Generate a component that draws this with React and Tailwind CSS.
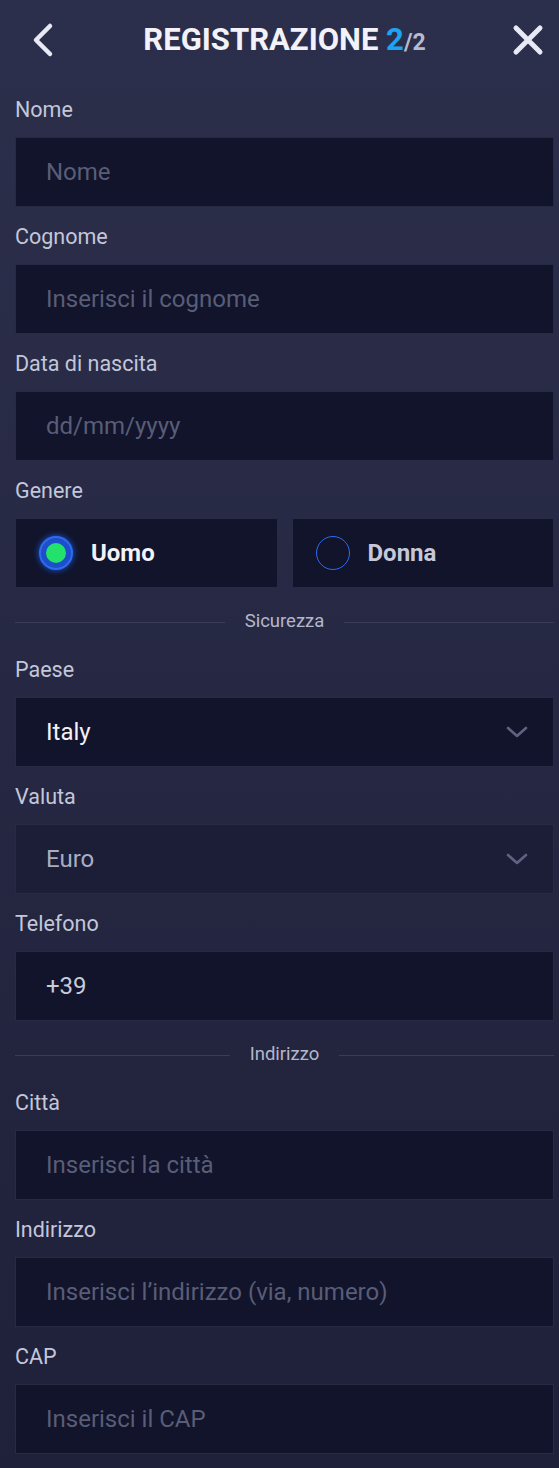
import React from 'react';

const font = { fontFamily: 'Roboto, "Noto Sans", sans-serif' };

const Label = ({ children }) => (
    <div className="mt-[18px] mb-[15px] h-[24px] leading-[24px] text-[21.5px] text-[#c3c7da]">{children}</div>
);

const TextField = ({ placeholder, value }) => (
    <div className="h-[70px] flex items-center pl-[30px] bg-[#11142b] border border-[#262a45] text-[24px]">
        {value ? <span className="text-[#c8cbda]">{value}</span> : <span className="text-[#595d76]">{placeholder}</span>}
    </div>
);

const Chevron = () => (
    <svg width="22" height="14" viewBox="0 0 22 14" fill="none" stroke="#5f6380" strokeWidth="2.6" strokeLinecap="round" strokeLinejoin="round">
        <path d="M2 3l9 8 9-8" />
    </svg>
);

const SelectField = ({ value, muted }) => (
    <div className={`h-[70px] flex items-center justify-between pl-[30px] pr-[25px] border border-[#262a45] text-[24px] ${muted ? 'bg-[#1c1e37] text-[#a9adc2]' : 'bg-[#11142b] text-[#f1f1f6]'}`}>
        <span>{value}</span>
        <Chevron />
    </div>
);

const Divider = ({ children }) => (
    <div className="mt-[22px] mb-[24px] h-[24px] flex items-center gap-5">
        <div className="flex-1 h-px bg-[#393d5b]"></div>
        <span className="text-[18.5px] text-[#b3b7cb]">{children}</span>
        <div className="flex-1 h-px bg-[#393d5b]"></div>
    </div>
);

export default function App() {
    return (
        <div style={font} className="min-h-[1468px] bg-gradient-to-b from-[#2c2f4b] via-[#262843] to-[#1f2039] pl-[15px] pr-[5px] pb-[12px]">
            {/* header */}
            <div className="h-[80px] flex items-center justify-between">
                <svg width="48" height="50" viewBox="0 0 48 50" fill="none" stroke="#e9e9f5" strokeWidth="4.5" strokeLinecap="round" strokeLinejoin="round">
                    <path d="M35 11L21 25l14 14" />
                </svg>
                <div className="text-[31px] font-bold text-[#f2f2f8]">
                    REGISTRAZIONE <span className="text-[#1ea3f2]">2</span><span className="text-[23px] text-[#b7bbcf]">/2</span>
                </div>
                <svg width="48" height="50" viewBox="0 0 48 50" fill="none" stroke="#e9e9f5" strokeWidth="5" strokeLinecap="round">
                    <path d="M10 13l24 24M34 13L10 37" />
                </svg>
            </div>

            <Label>Nome</Label>
            <TextField placeholder="Nome" />
            <Label>Cognome</Label>
            <TextField placeholder="Inserisci il cognome" />
            <Label>Data di nascita</Label>
            <TextField placeholder="dd/mm/yyyy" />
            <Label>Genere</Label>
            <div className="grid grid-cols-2 gap-[14px]">
                <div className="h-[70px] flex items-center gap-[18px] pl-[23px] bg-[#11142b] border border-[#262a45]">
                    <span className="w-[34px] h-[34px] rounded-full bg-[#1c4fc9] border-2 border-[#2f6bf0] flex items-center justify-center shadow-[0_0_6px_#1d5be0]">
                        <span className="w-[20px] h-[20px] rounded-full bg-[#22e26c]"></span>
                    </span>
                    <span className="text-[24px] font-bold text-[#f2f2f8]">Uomo</span>
                </div>
                <div className="h-[70px] flex items-center gap-[18px] pl-[23px] bg-[#11142b] border border-[#262a45]">
                    <span className="w-[34px] h-[34px] rounded-full border-[1.5px] border-[#2f6bf0]"></span>
                    <span className="text-[24px] font-bold text-[#c5c8d8]">Donna</span>
                </div>
            </div>

            <Divider>Sicurezza</Divider>
            <Label>Paese</Label>
            <SelectField value="Italy" />
            <Label>Valuta</Label>
            <SelectField value="Euro" muted />
            <Label>Telefono</Label>
            <TextField value="+39" />

            <Divider>Indirizzo</Divider>
            <Label>Città</Label>
            <TextField placeholder="Inserisci la città" />
            <Label>Indirizzo</Label>
            <TextField placeholder="Inserisci l’indirizzo (via, numero)" />
            <Label>CAP</Label>
            <TextField placeholder="Inserisci il CAP" />
        </div>
    );
}
